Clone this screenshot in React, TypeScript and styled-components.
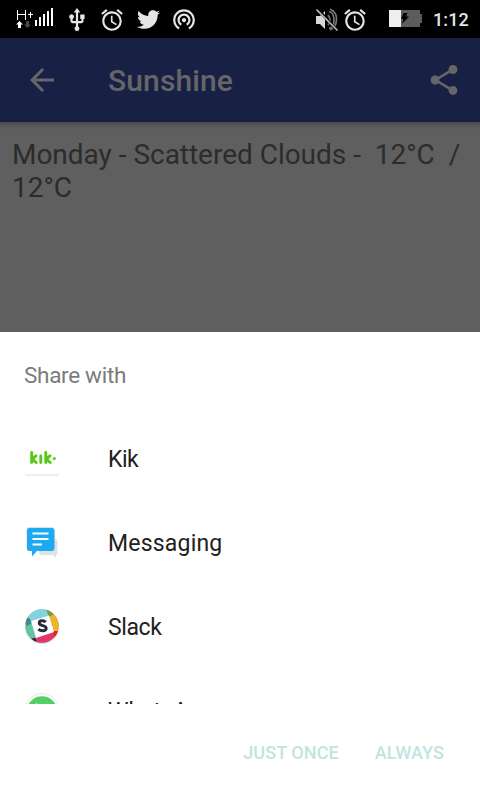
import React from "react";
import styled, { createGlobalStyle } from "styled-components";
import { MdAlarm, MdArrowBack, MdShare, MdUsb, MdWifiTethering } from "react-icons/md";
import { FaTwitter } from "react-icons/fa";

const GlobalStyle = createGlobalStyle`
  body { margin: 0; background: #fff; font-family: Roboto, sans-serif; }
  svg { display: block; flex: none; }
`;

const Screen = styled.main`
  display: flex;
  flex-direction: column;
  width: 480px;
  height: 800px;
  overflow: hidden;
  background: #fff;
`;

const StatusBar = styled.header`
  display: flex;
  align-items: center;
  flex: none;
  height: 38px;
  background: #000;
  color: #e6e6e6;
`;

const StatusSlot = styled.span<{ $gap: number; $drop?: number }>`
  margin-left: ${(p) => p.$gap}px;
  padding-top: ${(p) => p.$drop ?? 0}px;
`;

const Clock = styled.time`
  margin-left: 11px;
  padding-top: 2px;
  font-size: 18px;
  font-weight: 500;
  line-height: 22px;
  letter-spacing: 0.1px;
`;

const AppBar = styled.div`
  display: flex;
  align-items: center;
  flex: none;
  box-sizing: border-box;
  height: 84px;
  padding: 0 18px 0 24px;
  background: #192045;
  color: #666;
`;

const Title = styled.h1`
  flex: 1;
  margin: 0 0 0 48px;
  padding-top: 2px;
  font-size: 30px;
  font-weight: 500;
  line-height: 36px;
  letter-spacing: 0.12px;
`;

const Content = styled.section`
  flex: none;
  box-sizing: border-box;
  height: 210px;
  padding: 16px 12px;
  background: linear-gradient(#484848, #595959 4px, #5f5f5f 8px);
`;

const Forecast = styled.p`
  margin: 0;
  color: #2c2c2c;
  font-size: 28px;
  line-height: 33px;
  letter-spacing: -0.02px;
  white-space: pre-wrap;
`;

const Sheet = styled.section`
  display: flex;
  flex-direction: column;
  flex: none;
  height: 468px;
  background: #fff;
`;

const SheetTitle = styled.h2`
  flex: none;
  box-sizing: border-box;
  height: 85px;
  margin: 0;
  padding: 29px 24px 0;
  color: #7b7b7b;
  font-size: 22.5px;
  font-weight: 400;
  line-height: 28px;
  letter-spacing: -0.3px;
`;

const Targets = styled.ul`
  flex: none;
  height: 287px;
  margin: 0;
  padding: 0;
  overflow: hidden;
  list-style: none;
`;

const Target = styled.li`
  display: flex;
  align-items: center;
  height: 84px;
  padding-left: 24px;
`;

const TargetName = styled.span<{ $tracking: number }>`
  margin-left: 48px;
  padding-top: 2px;
  color: #212121;
  font-size: 23px;
  line-height: 30px;
  letter-spacing: ${(p) => p.$tracking}px;
`;

const Actions = styled.footer`
  display: flex;
  justify-content: flex-end;
  gap: 36px;
  padding: 37px 36px 0 0;
`;

const Action = styled.button`
  padding: 0;
  border: 0;
  background: none;
  color: #bfe5e1;
  font: 500 18px/24px Roboto, sans-serif;
  letter-spacing: 0.08px;
`;

const Signal = () => (
  <svg width="40" height="24" viewBox="0 0 40 24" fill="#fff">
    <path d="M1 2h1v4h7V2h1v10H9V7H2v5H1zM12 6h2V4h1v2h2v1h-2v3h-1V7h-2z" />
    <path d="M3.500 13L7 16.500H5V20H2v-3.500H0z" />
    <path d="M10 13h3v3.500h2L11.500 20 8 16.500h2z" fill="#484848" />
    <path d="M19 12h2v6h-2zM23 9h2v9h-2zM27 6h2v12h-2zM31 3h2v15h-2zM35 0h2v18h-2z" />
  </svg>
);

const Muted = () => (
  <svg width="23" height="24" viewBox="0 0 23 24">
    <path d="M0 8h4l5-5v18l-5-5H0z" fill="#d8d8d8" />
    <path d="M12 7q4 5 0 10M13 3.500q5 1 5 8.500t-5 8.500M14 1q7 3 6.500 11T14 22" fill="none" stroke="#777" strokeWidth="1.700" />
    <path d="M1.500 1L21.500 23" stroke="#000" strokeWidth="3" />
    <path d="M.5 1.500L21.500 22.500" stroke="#b8b8b8" strokeWidth="1.700" />
  </svg>
);

const Battery = () => (
  <svg width="33" height="18" viewBox="0 0 33 18">
    <path d="M0 0h31v4h2v9h-2v4H0z" fill="#5c5c5c" />
    <path d="M0 0h12v17H0z" fill="#eee" />
    <path d="M14.500 3h4l-1.500 3.500h3L13 14l1.500-5H12z" fill="#000" />
  </svg>
);

const KikIcon = () => (
  <svg width="36" height="36" viewBox="0 0 36 36">
    <rect x="1" y="2" width="34" height="33" rx="2" fill="#ececec" />
    <rect x="1" y="0" width="34" height="33.300" rx="2" fill="#fff" />
    <path d="M7.700 11.500v10M12 14.700l-3.500 3.600 3.700 3.200M16.800 15v6.500M21.800 11.500v10M26 14.700l-3.500 3.600 3.700 3.200" fill="none" stroke="#58c912" strokeWidth="2.900" strokeLinecap="round" strokeLinejoin="round" />
    <circle cx="30.300" cy="17.500" r="1.500" fill="#58c912" />
  </svg>
);

const MessagingIcon = () => (
  <svg width="36" height="36" viewBox="0 0 36 36">
    <path d="M15 14h16q2.500 0 2.500 2v12q0 2-1.500 2v3l-3-3H17q-2 0-2-2z" fill="#e2e2e2" />
    <rect x="2.500" y="2" width="28" height="24" rx="3" fill="#dedede" />
    <path d="M5.500 3h22q3 0 3 3v17q0 3-3 3H13l-5 5.500V26H5.500q-2.500 0-2.500-3V6q0-3 2.500-3z" fill="#1caaf2" />
    <path d="M8.500 8.500h16M8.500 14h16M8.500 19.500H18" stroke="#fff" strokeWidth="2.200" />
  </svg>
);

const SlackIcon = () => (
  <svg width="36" height="36" viewBox="0 0 36 36">
    <defs><clipPath id="slack-disc"><circle cx="18" cy="17" r="16.700" /></clipPath></defs>
    <circle cx="18" cy="18" r="17" fill="#ddd" />
    <g clipPath="url(#slack-disc)">
      <path d="M0 0h36v36H0z" fill="#62c4a1" />
      <path d="M0 0h24l2 8L7 13 2 9z" fill="#83d2df" />
      <path d="M23 0l4 5 9-1v20l-7 1z" fill="#edb42c" />
      <path d="M22 0h5l3 5-5 3z" fill="#799b3e" />
      <path d="M0 12l2-5 4 3 2 4-5 3z" fill="#468a88" />
      <path d="M10 29l20-6 3 3-8 10H12z" fill="#e23769" />
      <path d="M29 22h6l-4 7z" fill="#e52027" />
      <path d="M5 30l6-1 3 7H8z" fill="#351735" />
      <path d="M7 12l18-5.500 5 16.500-18 6z" fill="#fff" />
    </g>
    <path d="M21.800 13c-2-1.800-6.600-1.700-6.600 1 0 3.400 7 1.700 7 5.200 0 3.200-5.400 3.200-7.800.9" fill="none" stroke="#242b38" strokeWidth="2.900" />
  </svg>
);

const WhatsAppIcon = () => (
  <svg width="36" height="36" viewBox="0 0 36 36">
    <circle cx="18" cy="17.500" r="17" fill="#fff" stroke="#dedede" strokeWidth=".8" />
    <circle cx="18" cy="18.500" r="15.300" fill="#55cf65" />
    <path d="M10 13l2.500-3 3 4-2 3q3 5 7 6l3-2 4 3-3 4q-11-1-14.500-11z" fill="#fff" />
  </svg>
);

const targets = [
  { name: "Kik", Icon: KikIcon, tracking: -0.5 },
  { name: "Messaging", Icon: MessagingIcon, tracking: 0.2 },
  { name: "Slack", Icon: SlackIcon, tracking: -0.4 },
  { name: "WhatsApp", Icon: WhatsAppIcon, tracking: 0 },
];

export default function App() {
  return (
    <>
      <GlobalStyle />
      <Screen>
        <StatusBar>
          <StatusSlot $gap={16} $drop={2}><Signal /></StatusSlot>
          <StatusSlot $gap={8} $drop={1}><MdUsb size={26} /></StatusSlot>
          <StatusSlot $gap={9} $drop={1}><MdAlarm size={26} /></StatusSlot>
          <StatusSlot $gap={12}><FaTwitter size={23} /></StatusSlot>
          <StatusSlot $gap={11}><MdWifiTethering size={26} /></StatusSlot>
          <StatusSlot $gap={119} $drop={2}><Muted /></StatusSlot>
          <StatusSlot $gap={3} $drop={1}><MdAlarm size={26} /></StatusSlot>
          <StatusSlot $gap={21}><Battery /></StatusSlot>
          <Clock>1:12</Clock>
        </StatusBar>
        <AppBar>
          <MdArrowBack size={36} />
          <Title>Sunshine</Title>
          <MdShare size={36} />
        </AppBar>
        <Content>
          <Forecast>{"Monday - Scattered Clouds -  12°C  / 12°C"}</Forecast>
        </Content>
        <Sheet>
          <SheetTitle>Share with</SheetTitle>
          <Targets>
            {targets.map(({ name, Icon, tracking }) => (
              <Target key={name}>
                <Icon />
                <TargetName $tracking={tracking}>{name}</TargetName>
              </Target>
            ))}
          </Targets>
          <Actions>
            <Action>JUST ONCE</Action>
            <Action>ALWAYS</Action>
          </Actions>
        </Sheet>
      </Screen>
    </>
  );
}
